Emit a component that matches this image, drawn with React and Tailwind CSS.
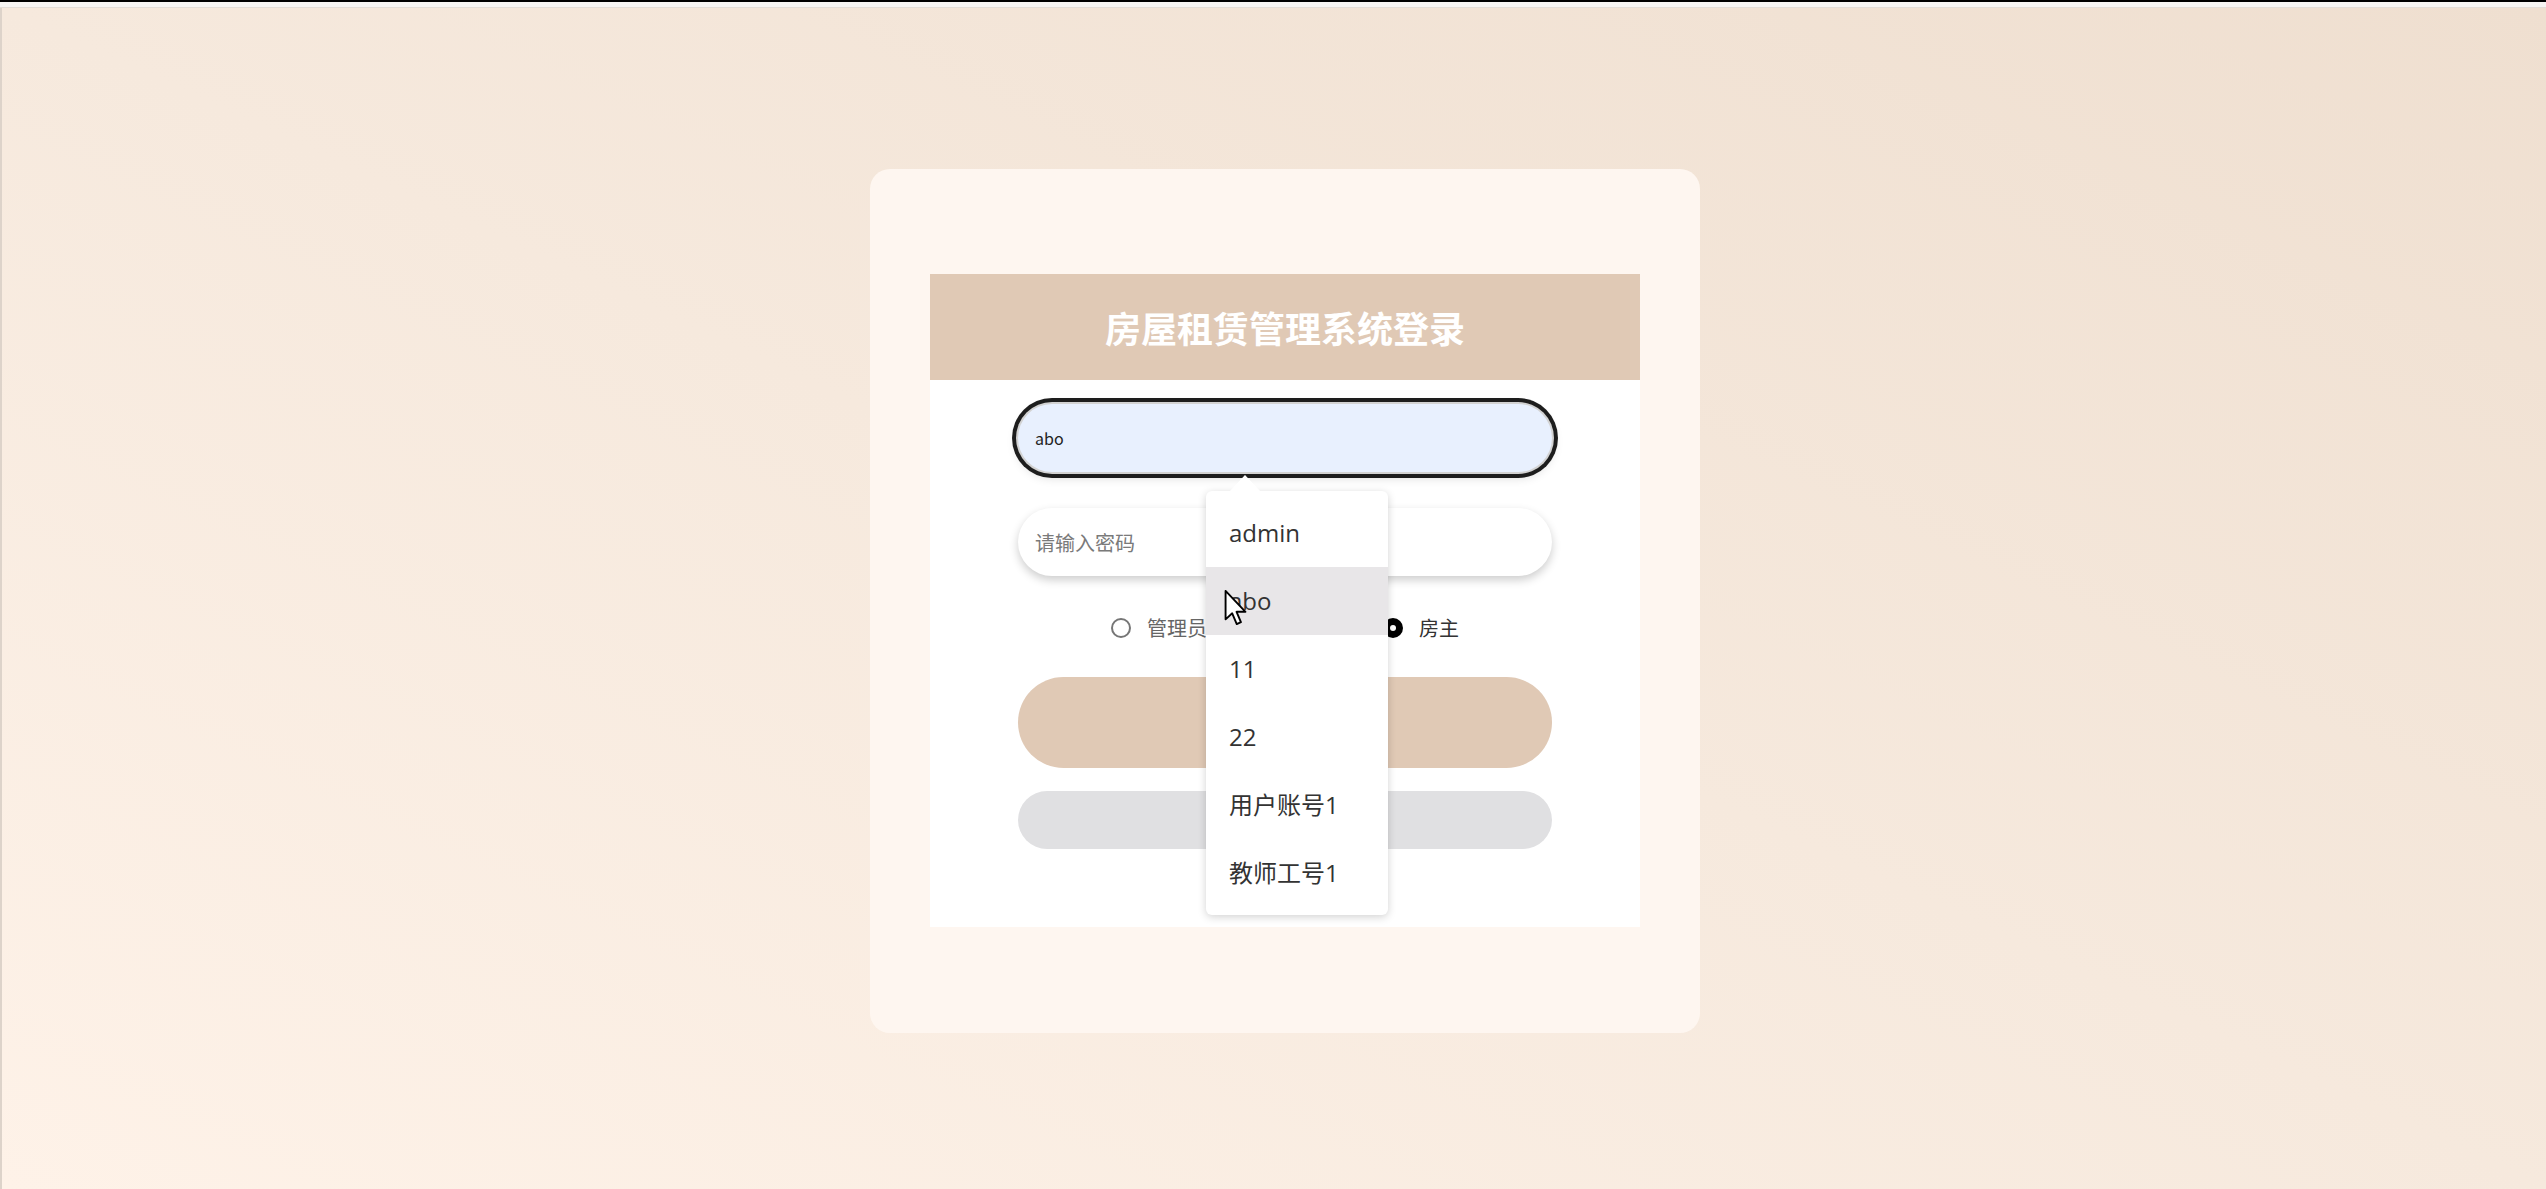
import React from 'react';

const suggestions = ['admin', 'abo', '11', '22', '用户账号1', '教师工号1'];

const roles = [
  { label: '管理员', checked: false },
  { label: '', checked: false },
  { label: '房主', checked: true },
];

const Radio = ({ label, checked }) => (
  <label className="flex items-center gap-[16px] text-[20px]">
    {checked ? (
      <span className="w-[20px] h-[20px] rounded-full bg-black flex items-center justify-center">
        <span className="w-[6px] h-[6px] rounded-full bg-white" />
      </span>
    ) : (
      <span className="w-[20px] h-[20px] rounded-full border-2 border-[#767676] bg-white" />
    )}
    {label ? (
      <span className={checked ? 'text-[#333]' : 'text-[#666]'}>{label}</span>
    ) : (
      <span className="w-[40px]" />
    )}
  </label>
);

const Cursor = () => (
  <svg className="absolute left-[18px] top-[23px] w-[24px] h-[36px]" viewBox="0 0 12 19">
    <path d="M0.5 0.5 L0.5 15.5 L4 12.3 L6.4 18 L8.6 17 L6.3 11.5 L11 11.5 Z" fill="#fff" stroke="#000" strokeWidth="1" strokeLinejoin="round" />
  </svg>
);

const Suggestions = () => (
  <div className="absolute left-[188px] top-[87px] z-10 w-[182px] rounded-[6px] bg-white py-[8px] shadow-[0_2px_8px_rgba(0,0,0,0.18)]">
    <svg className="absolute -top-[16px] left-[23px] w-[32px] h-[17px]" viewBox="0 0 32 17">
      <polygon points="0,17 16,0 32,17" fill="#fff" />
    </svg>
    {suggestions.map((s) => (
      <div
        key={s}
        className={`relative h-[68px] flex items-center pl-[23px] text-[24px] text-[#333] ${s === 'abo' ? 'bg-[#e8e6e8]' : ''}`}
        style={{ fontFamily: '"Open Sans", "Noto Sans CJK SC", sans-serif' }}
      >
        {s}
        {s === 'abo' && <Cursor />}
      </div>
    ))}
  </div>
);

export default function App() {
  return (
    <div
      className="h-[1189px] flex flex-col overflow-hidden"
      style={{ fontFamily: '"Noto Sans CJK SC", "Noto Sans", sans-serif' }}
    >
      <div className="h-[2px] bg-black" />
      <div className="h-[6px] bg-[#f7f5f3] border-b border-[#e3ddd7]" />
      <main className="flex-1 flex items-center justify-center pl-[22px] pt-[5px] border-l-2 border-[#ddd3ca] bg-[linear-gradient(to_top_right,#fef2e8,#f6e9dd_50%,#efdfd0)]">
        <div className="w-[830px] h-[864px] rounded-[20px] bg-[#fef6f0] px-[60px] pt-[105px]">
          <div className="w-[710px] bg-white">
            <div className="h-[106px] bg-[#e0c9b5] flex items-center justify-center">
              <h1 className="text-[36px] font-bold text-white">房屋租赁管理系统登录</h1>
            </div>
            <div className="flex flex-col items-center pt-[24px] pb-[78px]">
              <div className="relative w-[534px] h-[68px]">
                <input
                  readOnly
                  defaultValue="abo"
                  className="w-full h-full rounded-full bg-[#e8f0fe] pl-[17px] text-[16px] text-[#222] outline-none shadow-[0_0_0_2px_#d2d2d2,0_0_0_6px_#1d1d1d,0_4px_12px_rgba(0,0,0,0.2)]"
                />
                <Suggestions />
              </div>
              <input
                readOnly
                placeholder="请输入密码"
                className="mt-[36px] w-[534px] h-[68px] rounded-full bg-white pl-[17px] text-[20px] outline-none placeholder:text-[#7a7a7a] shadow-[0_4px_10px_rgba(0,0,0,0.2)]"
              />
              <div className="mt-[37px] h-[30px] flex items-center gap-[50px]">
                {roles.map((r, i) => (
                  <Radio key={i} {...r} />
                ))}
              </div>
              <button aria-label="登录" className="mt-[34px] w-[534px] h-[91px] rounded-full bg-[#e0c9b5]" />
              <button aria-label="注册" className="mt-[23px] w-[534px] h-[58px] rounded-full bg-[#e0e0e2]" />
            </div>
          </div>
        </div>
      </main>
    </div>
  );
}
